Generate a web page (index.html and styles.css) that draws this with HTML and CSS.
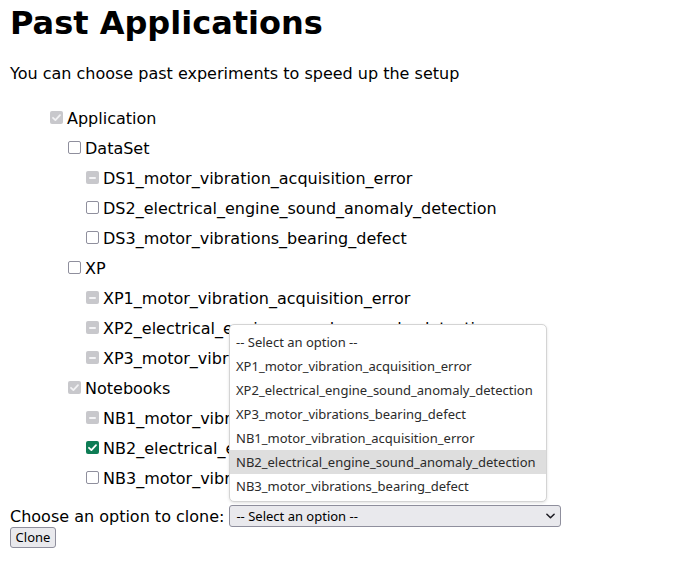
FILE: index.html
```html
<!DOCTYPE html>
<html>
<head>
<meta charset="utf-8">
<link rel="stylesheet" href="styles.css">
</head>
<body>
<h1 class="title">Past Applications</h1>
<p class="intro">You can choose past experiments to speed up the setup</p>
<ul class="tree">
  <li class="row"><span class="cb cb-dis-checked"><svg viewBox="0 0 13 13"><path d="M3 6.8 L5.4 9.1 L10 4.2" /></svg></span>Application</li>
  <li>
    <ul class="sub">
      <li class="row"><span class="cb"></span>DataSet</li>
      <li>
        <ul class="sub">
          <li class="row"><span class="cb cb-dis-ind"><i></i></span>DS1_motor_vibration_acquisition_error</li>
          <li class="row"><span class="cb"></span>DS2_electrical_engine_sound_anomaly_detection</li>
          <li class="row"><span class="cb"></span>DS3_motor_vibrations_bearing_defect</li>
        </ul>
      </li>
      <li class="row"><span class="cb"></span>XP</li>
      <li>
        <ul class="sub">
          <li class="row"><span class="cb cb-dis-ind"><i></i></span>XP1_motor_vibration_acquisition_error</li>
          <li class="row"><span class="cb cb-dis-ind"><i></i></span>XP2_electrical_engine_sound_anomaly_detection</li>
          <li class="row"><span class="cb cb-dis-ind"><i></i></span>XP3_motor_vibrations_bearing_defect</li>
        </ul>
      </li>
      <li class="row"><span class="cb cb-dis-checked"><svg viewBox="0 0 13 13"><path d="M3 6.8 L5.4 9.1 L10 4.2" /></svg></span>Notebooks</li>
      <li>
        <ul class="sub">
          <li class="row"><span class="cb cb-dis-ind"><i></i></span>NB1_motor_vibration_acquisition_error</li>
          <li class="row"><span class="cb cb-checked"><svg viewBox="0 0 13 13"><path d="M3 6.8 L5.4 9.1 L10 4.2" /></svg></span>NB2_electrical_engine_sound_anomaly_detection</li>
          <li class="row"><span class="cb"></span>NB3_motor_vibrations_bearing_defect</li>
        </ul>
      </li>
    </ul>
  </li>
</ul>
<div class="choose">
  <span class="choose-label">Choose an option to clone:</span>
  <div class="select">
    <span>-- Select an option --</span>
    <svg class="chev" viewBox="0 0 10 6"><path d="M1 1 L5 5 L9 1" /></svg>
  </div>
</div>
<div class="clone-row"><button class="btn">Clone</button></div>

<div class="popup">
  <div class="opt">-- Select an option --</div>
  <div class="opt">XP1_motor_vibration_acquisition_error</div>
  <div class="opt">XP2_electrical_engine_sound_anomaly_detection</div>
  <div class="opt">XP3_motor_vibrations_bearing_defect</div>
  <div class="opt">NB1_motor_vibration_acquisition_error</div>
  <div class="opt opt-hl">NB2_electrical_engine_sound_anomaly_detection</div>
  <div class="opt">NB3_motor_vibrations_bearing_defect</div>
</div>
</body>
</html>
```

FILE: styles.css
```css
html, body {
  background: #ffffff;
}
body {
  margin: 0;
  padding: 5px 10px 0;
  position: relative;
  font-family: "DejaVu Sans", sans-serif;
  font-size: 16px;
  color: #000;
}
.title {
  margin: 0;
  font-size: 32px;
  line-height: 37px;
  font-weight: bold;
}
.intro {
  margin: 22px 0 0;
  line-height: 19px;
}
.tree {
  list-style: none;
  margin: 20px 0 0;
  padding: 0 0 0 40px;
}
.sub {
  list-style: none;
  margin: 0;
  padding: 0 0 0 18px;
}
.row {
  display: flex;
  align-items: center;
  height: 30px;
  white-space: nowrap;
}
.cb {
  flex: none;
  box-sizing: border-box;
  width: 13px;
  height: 13px;
  margin: 0 4px 1px 0;
  border: 1px solid #8f8f9d;
  border-radius: 2px;
  background: #fff;
  display: flex;
  align-items: center;
  justify-content: center;
}
.cb svg {
  width: 13px;
  height: 13px;
  flex: none;
}
.cb svg path {
  fill: none;
  stroke: #fff;
  stroke-width: 1.8;
  stroke-linecap: round;
  stroke-linejoin: round;
}
.cb-dis-checked {
  border: none;
  background: #c8c8cc;
}
.cb-dis-checked svg path {
  stroke: #f2f2f4;
}
.cb-dis-ind {
  border: none;
  background: #c8c8cc;
}
.cb-dis-ind i {
  display: block;
  width: 7px;
  height: 2px;
  background: #f4f4f6;
  border-radius: 1px;
}
.cb-checked {
  border: none;
  background: #0e7c55;
}
.choose {
  display: flex;
  align-items: center;
  height: 24px;
  margin-top: 11px;
  white-space: nowrap;
}
.choose-label {
  line-height: 19px;
  margin-right: 5px;
}
.select {
  box-sizing: border-box;
  width: 332px;
  height: 22px;
  border: 1px solid #8f8f9d;
  border-radius: 3px;
  background: #e9e9ed;
  display: flex;
  align-items: center;
  justify-content: space-between;
  padding: 0 5px 0 6px;
  font-family: "Noto Sans", sans-serif;
  font-size: 13px;
  color: #000;
}
.chev {
  width: 9px;
  height: 6px;
}
.chev path {
  fill: none;
  stroke: #1c1b22;
  stroke-width: 1.7;
  stroke-linecap: round;
  stroke-linejoin: round;
}
.clone-row {
  display: flex;
}
.btn {
  margin: -1px 0 0;
  box-sizing: border-box;
  width: 46px;
  height: 21px;
  padding: 0;
  border: 1px solid #8f8f9d;
  border-radius: 3px;
  background: #e9e9ed;
  font-family: "Noto Sans", sans-serif;
  font-size: 13px;
  color: #000;
  line-height: 1;
}
.popup {
  position: absolute;
  left: 229px;
  top: 324px;
  box-sizing: border-box;
  width: 318px;
  height: 178px;
  padding-top: 5px;
  background: #fff;
  border: 1px solid #d4d4d4;
  border-radius: 5px;
  box-shadow: 0 1px 3px rgba(0, 0, 0, 0.12);
  font-family: "Noto Sans", sans-serif;
  font-size: 13px;
  color: #2b2b2b;
}
.opt {
  height: 24px;
  line-height: 24px;
  padding-left: 6px;
  white-space: nowrap;
}
.opt-hl {
  background: #dedede;
}
```
